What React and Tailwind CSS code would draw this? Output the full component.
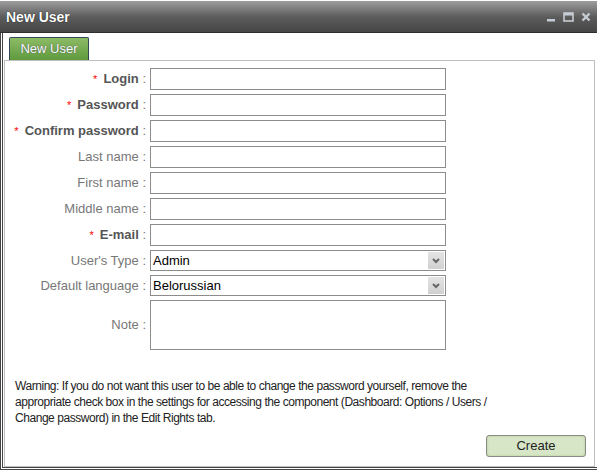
import React from 'react';

const fields = [
    { label: 'Login', required: true },
    { label: 'Password', required: true },
    { label: 'Confirm password', required: true },
    { label: 'Last name' },
    { label: 'First name' },
    { label: 'Middle name' },
    { label: 'E-mail', required: true },
];

function Label({ label, required }) {
    return (
        <div className="w-[145px] shrink-0 text-right pr-[4px] text-[13px] leading-[20px]">
            {required && <span className="text-[#ff0000] mr-[6px] text-[11px]">*</span>}
            <span className={required ? 'text-[#555] font-bold' : 'text-[#777]'}>{label}</span>
            <span className="text-[#777]"> :</span>
        </div>
    );
}

function SelectBox({ value }) {
    return (
        <div className="w-[296px] h-[21px] border border-[#8c8c8c] bg-white flex items-center">
            <span className="flex-1 pl-[2px] text-[13px] text-black">{value}</span>
            <div className="w-[16px] h-[17px] mr-[1px] bg-gradient-to-b from-[#e4e4e4] to-[#d0d0d0] flex items-center justify-center">
                <svg width="8" height="6" viewBox="0 0 8 6">
                    <path d="M1 1 L4 4 L7 1" stroke="#666" strokeWidth="2" fill="none" />
                </svg>
            </div>
        </div>
    );
}

export default function App() {
    return (
        <div className="w-[597px] h-[470px] bg-white overflow-hidden flex flex-col" style={{ fontFamily: '"Liberation Sans", Arial, sans-serif' }}>
            <div className="h-[2px] border-b border-[#9a9a9a] bg-white" />
            <div className="h-[31px] shrink-0 flex items-center justify-between px-[6px] border-b border-[#2e2e2e] bg-gradient-to-b from-[#9a9a9a] via-[#5c5c5c] to-[#464646]">
                <span className="text-white font-bold text-[14px] [text-shadow:0_0_1px_#000]">New User</span>
                <div className="flex items-center gap-[7px]">
                    <svg width="10" height="10" viewBox="0 0 10 10"><rect x="1" y="7" width="8" height="2.5" fill="#c5ccd4" /></svg>
                    <svg width="11" height="10" viewBox="0 0 11 10"><rect x="1" y="1" width="9" height="8" fill="none" stroke="#c5ccd4" strokeWidth="1.6" /><rect x="1" y="1" width="9" height="2.5" fill="#c5ccd4" /></svg>
                    <svg width="10" height="10" viewBox="0 0 10 10"><path d="M1.5 1.5 L8.5 8.5 M8.5 1.5 L1.5 8.5" stroke="#c5ccd4" strokeWidth="2.4" /></svg>
                </div>
            </div>
            <div className="flex-1 flex border-l-[3px] border-double border-[#444] border-b-[3px]">
                <div className="flex-1 flex flex-col pl-[1px] pr-[2px] pt-[4px]">
                    <div className="flex pl-[5px]">
                        <div className="h-[23px] w-[80px] border border-[#33475a] border-b-0 rounded-t-[2px] bg-gradient-to-b from-[#8dbb66] to-[#5f9a3d] text-white text-[13px] flex items-center justify-center [text-shadow:0_0_1px_#335]">
                            New User
                        </div>
                    </div>
                    <div className="flex-1 border border-[#c0c0c0] flex flex-col pt-[7px]">
                        <div className="flex flex-col gap-[4px]">
                            {fields.map((f) => (
                                <div key={f.label} className="flex items-center h-[22px]">
                                    <Label {...f} />
                                    <div className="w-[296px] h-[22px] border border-[#8c8c8c] bg-white" />
                                </div>
                            ))}
                            <div className="flex items-center h-[21px]">
                                <Label label="User's Type" />
                                <SelectBox value="Admin" />
                            </div>
                            <div className="flex items-center h-[21px]">
                                <Label label="Default language" />
                                <SelectBox value="Belorussian" />
                            </div>
                            <div className="flex items-center h-[50px]">
                                <Label label="Note" />
                                <div className="w-[296px] h-[50px] border border-[#8c8c8c] bg-white" />
                            </div>
                        </div>
                        <p className="mt-[28px] ml-[10px] w-[500px] text-[12px] tracking-[-0.45px] leading-[16px] text-[#222]">
                            Warning: If you do not want this user to be able to change the password yourself, remove the appropriate check box in the settings for accessing the component (Dashboard: Options / Users / Change password) in the Edit Rights tab.
                        </p>
                        <div className="flex justify-end pr-[8px] mt-[9px]">
                            <button className="w-[100px] h-[22px] border border-[#8a8a8a] rounded-[3px] bg-[#d6e6c6] text-[13px] text-[#222] shadow-[inset_0_0_2px_#a8c87a]">
                                Create
                            </button>
                        </div>
                    </div>
                </div>
            </div>
        </div>
    );
}
